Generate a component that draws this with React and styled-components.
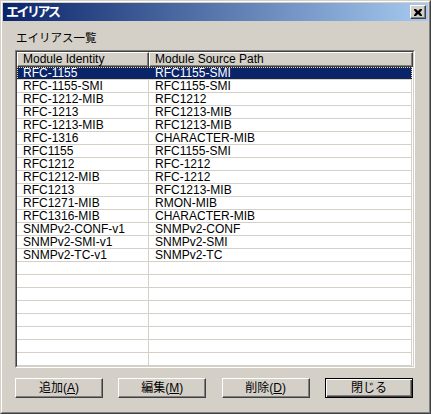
import styled, { createGlobalStyle } from "styled-components";

const GlobalStyle = createGlobalStyle`
  html, body {
    margin: 0;
    padding: 0;
    background: #d4d0c8;
  }
  * {
    box-sizing: border-box;
  }
`;

const UI_FONT = `"Liberation Sans", "Noto Sans CJK JP", sans-serif`;

const Window = styled.div`
  width: 431px;
  height: 414px;
  background: #d4d0c8;
  border: 1px solid;
  border-color: #d4d0c8 #404040 #404040 #d4d0c8;
  font-family: ${UI_FONT};
  font-size: 12px;
  color: #000;
`;

const WindowInner = styled.div`
  height: 100%;
  border: 1px solid;
  border-color: #fff #808080 #808080 #fff;
  padding: 1px;
  display: flex;
  flex-direction: column;
`;

const TitleBar = styled.div`
  height: 18px;
  flex: none;
  display: flex;
  align-items: center;
  justify-content: space-between;
  padding: 0 2px 0 3px;
  background: linear-gradient(to right, #0a246a, #a6caf0);
`;

const Title = styled.span`
  color: #fff;
  font-weight: bold;
  font-size: 13px;
  letter-spacing: -2.5px;
  line-height: 18px;
`;

const CloseButton = styled.button`
  width: 16px;
  height: 14px;
  padding: 0;
  background: #d4d0c8;
  border: 1px solid;
  border-color: #fff #404040 #404040 #fff;
  box-shadow: inset -1px -1px 0 #808080;
  display: flex;
  align-items: center;
  justify-content: center;
`;

const Content = styled.div`
  flex: 1;
  display: flex;
  flex-direction: column;
  padding: 10px 13px 0 12px;
`;

const GroupLabel = styled.div`
  height: 14px;
  line-height: 14px;
  padding-left: 1px;
  margin-bottom: 5px;
  font-size: 11.5px;
`;

const ListView = styled.div`
  width: 400px;
  height: 318px;
  border: 1px solid;
  border-color: #808080 #fff #fff #808080;
  background: #fff;
`;

const ListInner = styled.div`
  height: 100%;
  border: 1px solid;
  border-color: #404040 #d4d0c8 #d4d0c8 #404040;
  overflow: hidden;
`;

const HeaderRow = styled.div`
  display: flex;
  height: 15px;
`;

const HeaderCell = styled.div`
  width: ${(p) => p.$width}px;
  height: 15px;
  background: #d4d0c8;
  border: 1px solid;
  border-color: #fff #404040 #404040 #fff;
  box-shadow: inset -1px -1px 0 #808080;
  padding-left: 5px;
  line-height: 13px;
  white-space: nowrap;
  overflow: hidden;
`;

const Row = styled.div`
  display: flex;
  height: 13px;
  background: ${(p) => (p.$selected ? "#0a246a" : "#fff")};
  color: ${(p) => (p.$selected ? "#fff" : "#000")};
  border-bottom: 1px solid #d4d0c8;
  width: 395px;
  ${(p) => (p.$selected ? "outline: 1px dotted #f2d98c; outline-offset: -1px;" : "")}
`;

const Cell = styled.div`
  width: ${(p) => p.$width}px;
  height: 12px;
  line-height: 12px;
  padding-left: 6px;
  white-space: nowrap;
  overflow: hidden;
  border-right: 1px solid ${(p) => (p.$selected ? "#0a246a" : "#d4d0c8")};
`;

const ButtonBar = styled.div`
  display: flex;
  justify-content: space-between;
  width: 398px;
  margin-top: 10px;
`;

const Button = styled.button`
  width: 88px;
  height: 20px;
  padding: 0;
  font-family: ${UI_FONT};
  font-size: 12px;
  color: #000;
  background: #d4d0c8;
  border: 1px solid;
  border-color: ${(p) => (p.$default ? "#000" : "#fff #404040 #404040 #fff")};
  box-shadow: ${(p) =>
    p.$default
      ? "inset 1px 1px 0 #fff, inset -1px -1px 0 #404040, inset -2px -2px 0 #808080"
      : "inset -1px -1px 0 #808080"};
  display: flex;
  align-items: center;
  justify-content: center;
  line-height: 14px;
`;

const Mnemonic = styled.span`
  text-decoration: underline;
  text-underline-offset: 1px;
`;

const COL1 = 132;
const COL2 = 264;

const rows = [
  ["RFC-1155", "RFC1155-SMI"],
  ["RFC-1155-SMI", "RFC1155-SMI"],
  ["RFC-1212-MIB", "RFC1212"],
  ["RFC-1213", "RFC1213-MIB"],
  ["RFC-1213-MIB", "RFC1213-MIB"],
  ["RFC-1316", "CHARACTER-MIB"],
  ["RFC1155", "RFC1155-SMI"],
  ["RFC1212", "RFC-1212"],
  ["RFC1212-MIB", "RFC-1212"],
  ["RFC1213", "RFC1213-MIB"],
  ["RFC1271-MIB", "RMON-MIB"],
  ["RFC1316-MIB", "CHARACTER-MIB"],
  ["SNMPv2-CONF-v1", "SNMPv2-CONF"],
  ["SNMPv2-SMI-v1", "SNMPv2-SMI"],
  ["SNMPv2-TC-v1", "SNMPv2-TC"],
];

const EMPTY_ROWS = 8;

export default function App() {
  const allRows = [...rows, ...Array.from({ length: EMPTY_ROWS }, () => ["", ""])];

  return (
    <>
      <GlobalStyle />
      <Window>
        <WindowInner>
          <TitleBar>
            <Title>エイリアス</Title>
            <CloseButton aria-label="close">
              <svg width="8" height="7" viewBox="0 0 8 7">
                <path d="M0 0h2l2 2 2-2h2v1L6 3.5 8 6v1H6L4 5 2 7H0V6l2-2.5L0 1z" fill="#000" />
              </svg>
            </CloseButton>
          </TitleBar>
          <Content>
            <GroupLabel>エイリアス一覧</GroupLabel>
            <ListView>
              <ListInner>
                <HeaderRow>
                  <HeaderCell $width={COL1}>Module Identity</HeaderCell>
                  <HeaderCell $width={COL2}>Module Source Path</HeaderCell>
                </HeaderRow>
                {allRows.map(([id, path], i) => (
                  <Row key={i} $selected={i === 0}>
                    <Cell $width={COL1} $selected={i === 0}>{id}</Cell>
                    <Cell $width={COL2 - 1} $selected={i === 0}>{path}</Cell>
                  </Row>
                ))}
              </ListInner>
            </ListView>
            <ButtonBar>
              <Button>
                追加(<Mnemonic>A</Mnemonic>)
              </Button>
              <Button>
                編集(<Mnemonic>M</Mnemonic>)
              </Button>
              <Button>
                削除(<Mnemonic>D</Mnemonic>)
              </Button>
              <Button $default>閉じる</Button>
            </ButtonBar>
          </Content>
        </WindowInner>
      </Window>
    </>
  );
}
